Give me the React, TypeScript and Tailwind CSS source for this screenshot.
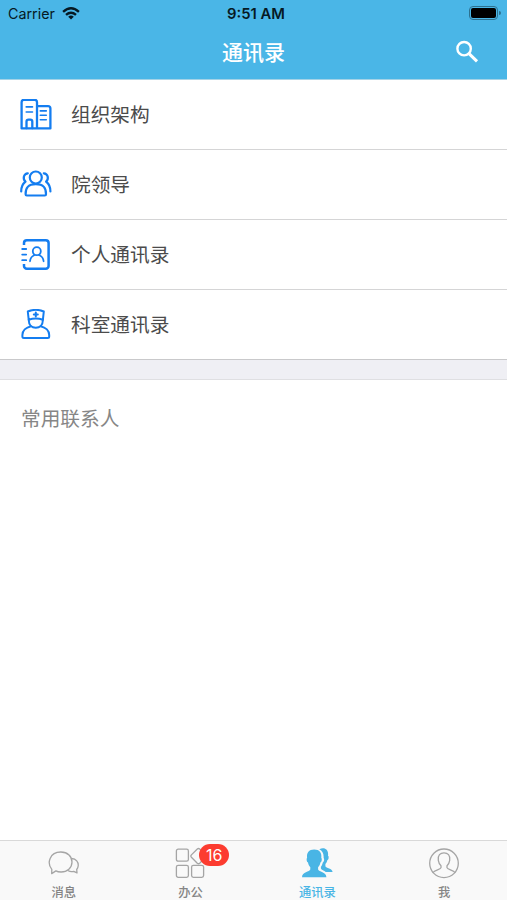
import type { ReactNode } from 'react';

const strokeProps = {
  fill: 'none',
  stroke: 'currentColor',
  strokeLinecap: 'round' as const,
  strokeLinejoin: 'round' as const,
};

function BuildingsIcon() {
  return (
    <svg viewBox="0 0 32 32" className="size-8 shrink-0" {...strokeProps} strokeWidth="2.3">
      <path d="M17 29.4V3.2a2.4 2.4 0 0 0-2.4-2.4H4A2.4 2.4 0 0 0 1.6 3.2v26.2h28.8V9.5A2.4 2.4 0 0 0 28 7.1H17" />
      <path d="M6.5 29.2v-6.5a2 2 0 0 1 2-2h1.8a2 2 0 0 1 2 2v6.5" />
      <path d="M6.2 7.9h6.3M6.2 13h6.3M20.3 11.9h6M20.3 16.3h6M20.3 20.7h6" strokeWidth="1.6" />
    </svg>
  );
}

function GroupIcon() {
  return (
    <svg viewBox="0 0 32 32" className="size-8 shrink-0" {...strokeProps} strokeWidth="2.2">
      <circle cx="15.8" cy="8.5" r="6" />
      <path d="M5.6 25.3c-.2-6.2 2.5-10.2 10.2-10.2s10.4 4 10.2 10.2c0 .7-.4 1.2-1.2 1.2h-18c-.8 0-1.2-.5-1.2-1.2Z" />
      <path d="M7.8 4.3C3.5 4.5 2.5 10.1 5.5 12.7C2.6 14.9 1.2 18.2 1.2 22.4M23.8 4.3c4.3.2 5.3 5.8 2.3 8.4c2.9 2.2 4.3 5.5 4.3 9.7" />
    </svg>
  );
}

function AddressBookIcon() {
  return (
    <svg viewBox="0 0 32 32" className="size-8 shrink-0" {...strokeProps} strokeWidth="2">
      <path d="M4 6V4.1A2.8 2.8 0 0 1 6.8 1.3h19A2.8 2.8 0 0 1 28.6 4.1v22.8a2.8 2.8 0 0 1-2.8 2.8h-19A2.8 2.8 0 0 1 4 26.9v-1.8" strokeWidth="2.5" strokeLinecap="butt" />
      <path d="M2.2 10h4M2.2 15.6h4M2.2 21.2h4" strokeWidth="1.8" />
      <circle cx="16.8" cy="12.2" r="4" strokeWidth="1.8" />
      <path d="M10 22.3c.3-3.6 2-5.3 4.6-6.3M19 16c2.6 1 4.3 2.7 4.6 6.3" strokeWidth="1.8" />
    </svg>
  );
}

function NurseIcon() {
  return (
    <svg viewBox="0 0 32 32" className="size-8 shrink-0" {...strokeProps} strokeWidth="2">
      <path d="m8.7 10.7-.9-8.2Q15.8-.8 23.8 2.5l-.9 8.2Q15.8 8.4 8.7 10.7Z" />
      <path d="M8.8 10.4v1.2c0 4.2 2.9 7.2 7 7.2s7-3 7-7.2v-1.2" />
      <path d="M11 17.2C5.8 18.4 2.4 22 2.4 26v1.4c0 1 .5 1.5 1.5 1.5h23.8c1 0 1.5-.5 1.5-1.5V26c0-4-3.4-7.6-8.6-8.8" />
      <path d="M15.8 3.4v4M13.8 5.4h4" />
    </svg>
  );
}

function WifiIcon() {
  return (
    <svg viewBox="0 0 18 13" className="-mt-[2px] h-[13px] w-[18px]" fill="none" stroke="currentColor" strokeWidth="2.4">
      <path d="M1.1 4.8Q9-2.1 16.9 4.8M4 7.8q5-4.3 10 0" />
      <path d="M9 12.6 6.2 9.7q2.8-2.3 5.6 0Z" fill="currentColor" stroke="none" />
    </svg>
  );
}

function ChatIcon() {
  return (
    <svg viewBox="0 0 32 32" className="size-8" {...strokeProps} strokeWidth="1.3">
      <path d="M4.8 22.3C-.3 16.3 2.5 5 13.8 5c7 0 11.2 4.4 11.2 10.1S20.3 25 14.1 25c-2.2 0-4-.4-5.2-1.1l-4.2 2.7Z" />
      <path d="M24.5 11.5c4.8.3 7 3.5 6.7 7.2-.1 1.6-.7 2.8-1.5 3.8l.3 3.4-3.3-1.6c-2 .6-3.8.4-5.4-.5" />
    </svg>
  );
}

function AppsIcon() {
  return (
    <svg viewBox="0 0 32 32" className="size-8" {...strokeProps} strokeWidth="1.3">
      <rect x="2.4" y="2.2" width="12" height="12" rx="1.8" />
      <rect x="2.4" y="18.3" width="12" height="12" rx="1.8" />
      <rect x="17.6" y="18.3" width="12" height="12" rx="1.8" />
      <path d="m17.4 7.9 5.9-5.9q1.2-1.1 2.4 0l5.9 5.9q1.1 1.2 0 2.4l-5.9 5.9q-1.2 1.1-2.4 0l-5.9-5.9q-1.1-1.2 0-2.4Z" />
    </svg>
  );
}

function ContactsIcon() {
  return (
    <svg viewBox="0 0 32 32" className="size-8" fill="currentColor">
      <path d="M18.3 2.2c5.6-2.4 9.5.5 8.7 6.6l.5.4c.4 1.8-.1 3.3-1.2 4-.4 1.7-1 2.8-1.9 3.8v2.2c.8 2 6.8 1.8 7.2 5.7h-6.9c-1.4-1.4-4.4-1.8-4.8-3.5v-1.7c.9-1.1 1.4-2.3 1.8-4 1.6-1.2 1.8-3.4.9-5 .3-4.2-1.2-7-4.3-8.5Z" />
      <path d="M13.2 2.4c5.3 0 7.7 3.1 7.1 8.3.9.9.6 4.1-.9 4.9-.4 2-1.2 3.5-2.3 4.7v2.3c.7 2.4 8.1 2.2 8.3 7.6H1c.2-5.4 7.6-5.2 8.3-7.6v-2.3C8.2 19.1 7.4 17.6 7 15.6c-1.5-.8-1.8-4-.9-4.9-.6-5.2 1.8-8.3 7.1-8.3Z" />
    </svg>
  );
}

function ProfileIcon() {
  return (
    <svg viewBox="0 0 32 32" className="size-8" {...strokeProps} strokeWidth="1.3">
      <circle cx="16" cy="16.3" r="14.3" />
      <path d="M5 25.5c1.6-2.6 7.7-2.8 8-4.8v-2c-1.5-1.4-2.4-3.3-2.7-5.3C9.6 8.2 12.2 5.9 16 5.9s6.4 2.3 5.7 7.5c-.3 2-1.2 3.9-2.7 5.3v2c.3 2 6.4 2.2 8 4.8" />
    </svg>
  );
}

const rows = [
  { label: '组织架构', icon: <BuildingsIcon /> },
  { label: '院领导', icon: <GroupIcon /> },
  { label: '个人通讯录', icon: <AddressBookIcon /> },
  { label: '科室通讯录', icon: <NurseIcon /> },
];

function Tab({ label, icon, active, badge }: { label: string; icon: ReactNode; active?: boolean; badge?: number }) {
  return (
    <button className={`flex flex-1 flex-col items-center pt-[6px] ${active ? 'text-[#49b5e5]' : 'text-[#a5a5a5]'}`}>
      <span className="relative">
        {icon}
        {badge && (
          <span className="absolute -top-[3px] left-[25px] flex h-[22px] w-[30px] items-center justify-center rounded-full bg-[#fc3c30] font-['Inter','Liberation_Sans',sans-serif] text-[16px] leading-none text-white">
            {badge}
          </span>
        )}
      </span>
      <span className={`mt-[5px] pl-px text-[12.3px] leading-4 font-medium ${active ? 'text-[#49b5e5]' : 'text-[#858585]'}`}>{label}</span>
    </button>
  );
}

export default function App() {
  return (
    <div className="flex h-[900px] w-full flex-col overflow-hidden bg-white font-['Noto_Sans_CJK_SC',sans-serif]">
      <header className="h-20 shrink-0 border-b border-[#a5d3e7] bg-[#4ab6e7]">
        <div className="grid h-7 grid-cols-[1fr_auto_1fr] items-center pr-[6px] pl-2 font-['Inter','Liberation_Sans',sans-serif] text-[#061923]">
          <div className="flex items-center gap-[7px] text-[14.3px]">
            <span>Carrier</span>
            <WifiIcon />
          </div>
          <span className="pl-[3px] text-[14.8px] font-semibold">9:51 AM</span>
          <div className="-mt-[2px] flex items-center justify-end gap-px">
            <div className="h-[14px] w-[29px] rounded-[4px] border border-[#2d718f] p-px">
              <div className="h-full rounded-[2px] bg-black" />
            </div>
            <div className="h-1 w-[2px] rounded-r-full bg-[#2d718f]" />
          </div>
        </div>
        <div className="grid h-[47px] grid-cols-[1fr_auto_1fr] items-center">
          <span />
          <h1 className="text-[21px] leading-none font-medium text-white">通讯录</h1>
          <button className="mr-7 justify-self-end text-white">
            <svg viewBox="0 0 24 24" className="size-6" fill="none" stroke="currentColor">
              <circle cx="9.1" cy="8.7" r="6.7" strokeWidth="2.4" />
              <path d="m14 13.6 8 7.8" strokeWidth="3" />
            </svg>
          </button>
        </div>
      </header>
      <nav className="shrink-0 border-b border-[#c9c9cb]">
        {rows.map((row, i) => (
          <button key={row.label} className="flex h-[70px] w-full pl-5 last:h-[69px]">
            <span className="flex h-[69px] items-center text-[#147df0]">{row.icon}</span>
            <span className={`-ml-8 flex-1 self-stretch ${i < 3 ? 'border-b border-[#d5d5d6]' : ''} flex items-center pb-[2px] pl-[51px] text-[19.7px] leading-none text-[#4b4b4b]`}>
              {row.label}
            </span>
          </button>
        ))}
      </nav>
      <div className="h-5 shrink-0 border-b border-[#dfdfe2] bg-[#efeff4]" />
      <main className="flex-1 px-[21px] pt-[28px]">
        <h2 className="text-[19.7px] leading-none text-[#868686]">常用联系人</h2>
      </main>
      <footer className="flex h-[60px] shrink-0 border-t border-[#d9d9d9] bg-[#f9f9f9]">
        <Tab label="消息" icon={<ChatIcon />} />
        <Tab label="办公" icon={<AppsIcon />} badge={16} />
        <Tab label="通讯录" icon={<ContactsIcon />} active />
        <Tab label="我" icon={<ProfileIcon />} />
      </footer>
    </div>
  );
}
